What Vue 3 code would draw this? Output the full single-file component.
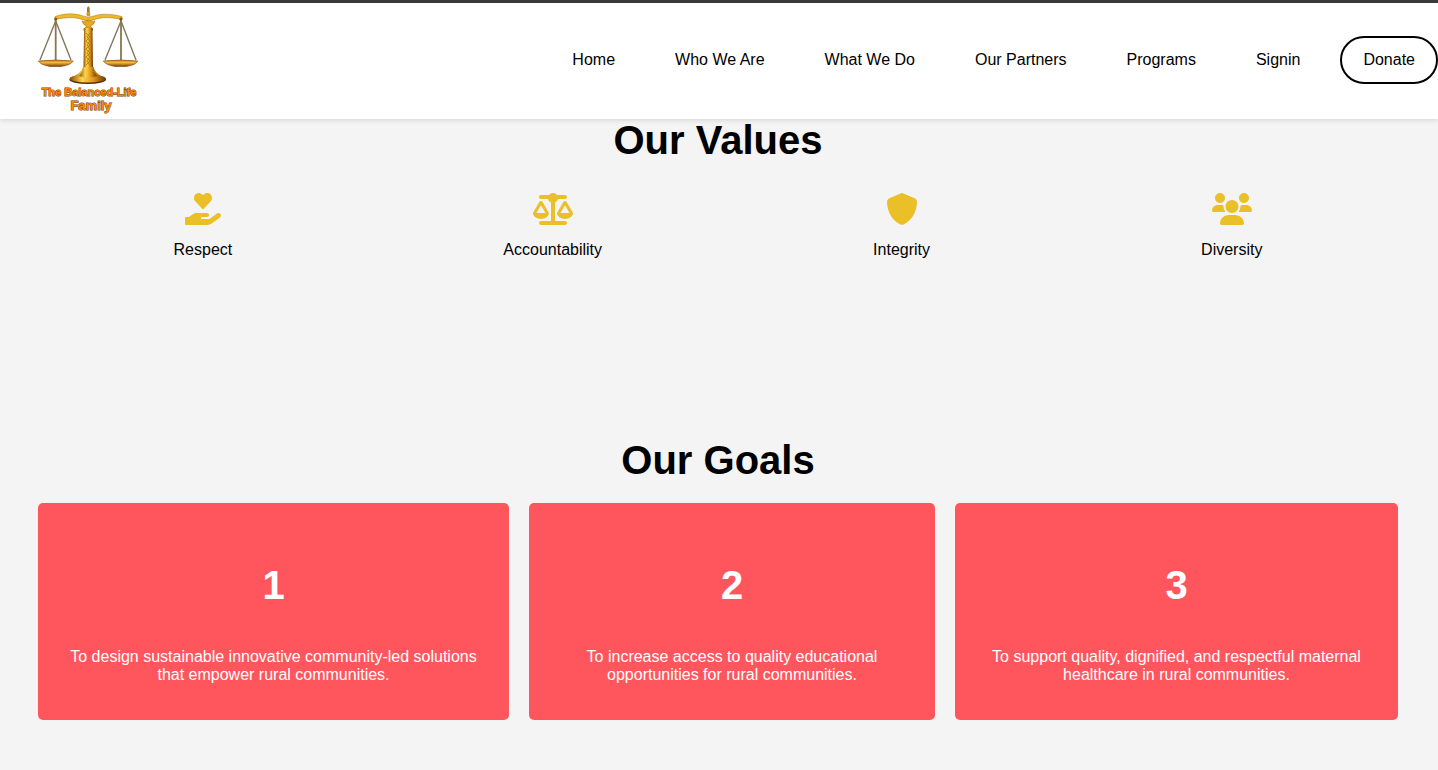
<script setup>
const links = ['Home', 'Who We Are', 'What We Do', 'Our Partners', 'Programs', 'Signin']

const values = [
  {
    label: 'Respect',
    box: '0 0 576 512',
    size: 36,
    path: 'M275.2 250.5c7 7.4 18.5 7.4 25.5 0l108.1-114.2c31.5-33.1 29.7-88.1-5.6-118.7c-30.9-26.7-76.8-21.9-104.9 7.7L288 36.9L276.8 25.3C248.7-4.3 202.7-9.2 171.1 17.6C136.7 48.2 134.7 103.2 166.4 136.3zM568.2 336.3c-13.1-17.8-38.1-21.7-55.9-8.5L392.6 416H272c-8.75 0-16-7.25-16-16s7.25-16 16-16h78.25c15.95 0 30.75-10.87 33.37-26.62C386.9 337.4 371.5 320 352 320H192c-29.12 0-57.25 10-79.88 28.12L65.62 384H16c-8.75 0-16 7.25-16 16v96c0 8.75 7.25 16 16 16h336.4c29.1 0 57.3-9.3 80.7-26.5l126.6-93.3c17.8-13.1 21.6-38.1 8.5-55.9z',
  },
  {
    label: 'Accountability',
    box: '0 0 640 512',
    size: 40,
    path: 'M384 32H512c17.7 0 32 14.3 32 32s-14.3 32-32 32H398.4c-5.2 25.8-22.9 47.1-46.4 57.3V448H512c17.7 0 32 14.3 32 32s-14.3 32-32 32H320 128c-17.7 0-32-14.3-32-32s14.3-32 32-32H288V153.3c-23.5-10.3-41.2-31.6-46.4-57.3H128c-17.7 0-32-14.3-32-32s14.3-32 32-32H256c14.6-19.4 37.8-32 64-32s49.4 12.6 64 32zm55.6 288H584.4L512 195.8 439.6 320zM512 416c-62.9 0-115.2-34-126-78.9c-2.6-11 1-22.3 6.7-32.1l95.2-163.2c5-8.6 14.2-13.8 24.1-13.8s19.1 5.3 24.1 13.8l95.2 163.2c5.7 9.8 9.3 21.1 6.7 32.1C627.2 382 574.9 416 512 416zM126.8 195.8L54.4 320H199.3L126.8 195.8zM.9 337.1c-2.6-11 1-22.3 6.7-32.1l95.2-163.2c5-8.6 14.2-13.8 24.1-13.8s19.1 5.3 24.1 13.8l95.2 163.2c5.7 9.8 9.3 21.1 6.7 32.1C242 382 189.7 416 126.8 416S11.7 382 .9 337.1z',
  },
  {
    label: 'Integrity',
    box: '0 0 512 512',
    size: 32,
    path: 'M256 0c4.6 0 9.2 1 13.4 2.9L457.7 82.8c22 9.3 38.4 31 38.3 57.2c-.5 99.2-41.3 280.7-213.6 363.2c-16.7 8-36.1 8-52.8 0C57.3 420.7 16.5 239.2 16 140c-.1-26.2 16.3-47.9 38.3-57.2L242.7 2.9C246.8 1 251.4 0 256 0z',
  },
  {
    label: 'Diversity',
    box: '0 0 640 512',
    size: 40,
    path: 'M319.9 320c57.41 0 103.1-46.56 103.1-104c0-57.44-46.54-104-103.1-104c-57.41 0-103.1 46.56-103.1 104C215.9 273.4 262.5 320 319.9 320zM369.9 352H270.1C191.6 352 128 411.7 128 485.3C128 500.1 140.7 512 156.4 512h327.2C499.3 512 512 500.1 512 485.3C512 411.7 448.4 352 369.9 352zM512 160c44.18 0 80-35.82 80-80S556.2 0 512 0c-44.18 0-80 35.82-80 80S467.8 160 512 160zM183.9 216c0-5.449 .9824-10.63 1.609-15.91C174.6 194.1 162.6 192 149.9 192H88.08C39.44 192 0 233.8 0 285.3C0 295.6 7.887 304 17.62 304h199.5C196.7 280.2 183.9 249.7 183.9 216zM128 160c44.18 0 80-35.82 80-80S172.2 0 128 0C83.82 0 48 35.82 48 80S83.82 160 128 160zM551.9 192h-61.84c-12.8 0-24.88 3.037-35.86 8.24C454.8 205.5 455.8 210.6 455.8 216c0 33.71-12.78 64.21-33.16 88h199.7C632.1 304 640 295.6 640 285.3C640 233.8 600.6 192 551.9 192z',
  },
]

const goals = [
  'To design sustainable innovative community-led solutions that empower rural communities.',
  'To increase access to quality educational opportunities for rural communities.',
  'To support quality, dignified, and respectful maternal healthcare in rural communities.',
]
</script>

<template>
  <div class="page">
    <header class="header">
      <a href="#" class="brand" aria-label="The Balanced-Life Family">
        <svg class="logo" width="104" height="112" viewBox="0 -1 104 112">
          <defs>
            <linearGradient id="gold" x1="0" y1="0" x2="1" y2="0">
              <stop offset="0" stop-color="#8a4a08" />
              <stop offset="0.35" stop-color="#ffd64a" />
              <stop offset="0.65" stop-color="#e09a1c" />
              <stop offset="1" stop-color="#6e3a06" />
            </linearGradient>
            <linearGradient id="pan" x1="0" y1="0" x2="0" y2="1">
              <stop offset="0" stop-color="#c77c12" />
              <stop offset="0.4" stop-color="#f6b93a" />
              <stop offset="1" stop-color="#7a3d05" />
            </linearGradient>
          </defs>
          <g fill="none" stroke="#85765c" stroke-width="1.4">
            <path d="M18.7 16L3 55M18.7 16L34 55M84 16L68 55M84 16L99 55" />
            <path d="M18.7 15V56M84 15V56" stroke="#8d7550" stroke-width="1.8" />
          </g>
          <path d="M18 11.5C30 7.5 39 8.5 46 11Q51 13 57 11C64 8.5 73 8.5 85 11.5L85 14.5C73 12 65 12 58 14.5Q51 17.5 45 14.5C38 12 30 12 18 14.5Z" fill="#edb92c" stroke="#a9741a" stroke-width="0.5" />
          <path d="M50 3L51.3 1L52.7 3V11H50Z" fill="#a77a28" />
          <circle cx="51.3" cy="9" r="2" fill="#d39a24" />
          <circle cx="18.7" cy="14" r="1.6" fill="#8a560f" />
          <circle cx="83.9" cy="14" r="1.6" fill="#8a560f" />
          <path d="M45 16Q48 18 51.3 15Q55 18 58 16Q57 20 53.5 21L55 23H48L49.5 21Q46 20 45 16Z" fill="#e7a91f" stroke="#9b610d" stroke-width="0.5" />
          <rect x="46.5" y="23" width="9.5" height="3" rx="1" fill="url(#gold)" />
          <path d="M47 26H55.5L56 62H46.5Z" fill="url(#gold)" />
          <path d="M49 28l4 4-4 4 4 4-4 4 4 4-4 4 4 4-4 4M53 28l-3 4 3 4-3 4 3 4-3 4 3 4-3 4 3 4" fill="none" stroke="#b87414" stroke-width="0.8" />
          <path d="M46 62H56.5Q58 69 68 73H33Q44 69 46 62Z" fill="url(#gold)" />
          <ellipse cx="50.7" cy="74.5" rx="18.3" ry="4.5" fill="#5b2d05" />
          <ellipse cx="50.7" cy="73.5" rx="18" ry="4" fill="url(#gold)" />
          <path d="M46 62H56.5Q57 67 60 71Q51 74 42 71Q45 68 46 62Z" fill="url(#gold)" />
          <g fill="url(#pan)" stroke="#7a4308" stroke-width="0.6">
            <path d="M1.3 56Q18.7 54 36.3 56Q34 60 24 61.5H13Q4 60 1.3 56Z" />
            <path d="M66.3 56Q84 54 100.7 56Q99 60 89 61.5H78Q69 60 66.3 56Z" />
          </g>
          <g class="logo-text" text-anchor="middle">
            <text x="52" y="91">The Balanced-Life</text>
            <text x="54" y="105" class="logo-sub">Family</text>
          </g>
        </svg>
      </a>
      <nav class="nav">
        <a v-for="link in links" :key="link" href="#" class="link">{{ link }}</a>
        <button type="button" class="donate">Donate</button>
      </nav>
    </header>

    <main class="main">
      <section class="values">
        <h2 class="title">Our Values</h2>
        <ul class="value-list">
          <li v-for="value in values" :key="value.label" class="value">
            <svg class="icon" :width="value.size" height="32" :viewBox="value.box" aria-hidden="true">
              <path :d="value.path" />
            </svg>
            <span>{{ value.label }}</span>
          </li>
        </ul>
      </section>

      <section class="goals">
        <h2 class="title">Our Goals</h2>
        <div class="cards">
          <article v-for="(goal, i) in goals" :key="goal" class="card">
            <h3 class="number">{{ i + 1 }}</h3>
            <p class="text">{{ goal }}</p>
          </article>
        </div>
      </section>
    </main>
  </div>
</template>

<style>
body {
  margin: 0;
  background: #f4f4f4;
}
</style>

<style scoped>
.page {
  font-family: "Liberation Sans", Arial, sans-serif;
  font-size: 16px;
  line-height: 18px;
  color: #000;
}

.header {
  display: flex;
  align-items: center;
  justify-content: space-between;
  padding: 1px 0 3px 37px;
  border-top: 3px solid #3b3a3b;
  background: #fff;
  box-shadow: 0 2px 4px rgba(0, 0, 0, 0.1);
}

.brand,
.logo {
  display: block;
}

.logo-text {
  font-family: "Liberation Sans", Arial, sans-serif;
  font-size: 11px;
  font-weight: 700;
  fill: #f58a0c;
  stroke: #7a3c06;
  stroke-width: 1px;
  paint-order: stroke;
}

.logo-sub {
  font-size: 13px;
}

.nav {
  display: flex;
  align-items: center;
}

.link {
  padding: 0 30px;
  color: #000;
  text-decoration: none;
}

.donate {
  margin-left: 10px;
  padding: 13px 21px;
  border: 2px solid #000;
  border-radius: 24px;
  background: #fff;
  color: #000;
  font: inherit;
}

.main {
  padding: 0 40px 50px 38px;
}

.title {
  margin: 0;
  font-size: 40px;
  font-weight: 700;
  line-height: 42px;
  text-align: center;
}

.value-list {
  display: flex;
  justify-content: space-around;
  margin: 32px 0 0;
  padding: 0;
  list-style: none;
}

.value {
  display: flex;
  flex-direction: column;
  align-items: center;
  gap: 16px;
}

.icon {
  fill: #ebbf28;
}

.goals {
  margin-top: 180px;
}

.cards {
  display: grid;
  grid-template-columns: 471fr 406fr 443fr;
  gap: 20px;
  margin-top: 22px;
}

.card {
  padding: 20px 20px 36px;
  border-radius: 5px;
  background: #ff565e;
  color: #fff;
  text-align: center;
}

.number {
  margin: 40px 0;
  font-size: 40px;
  line-height: 45px;
}

.text {
  margin: 0;
  padding: 0 10px;
}
</style>
